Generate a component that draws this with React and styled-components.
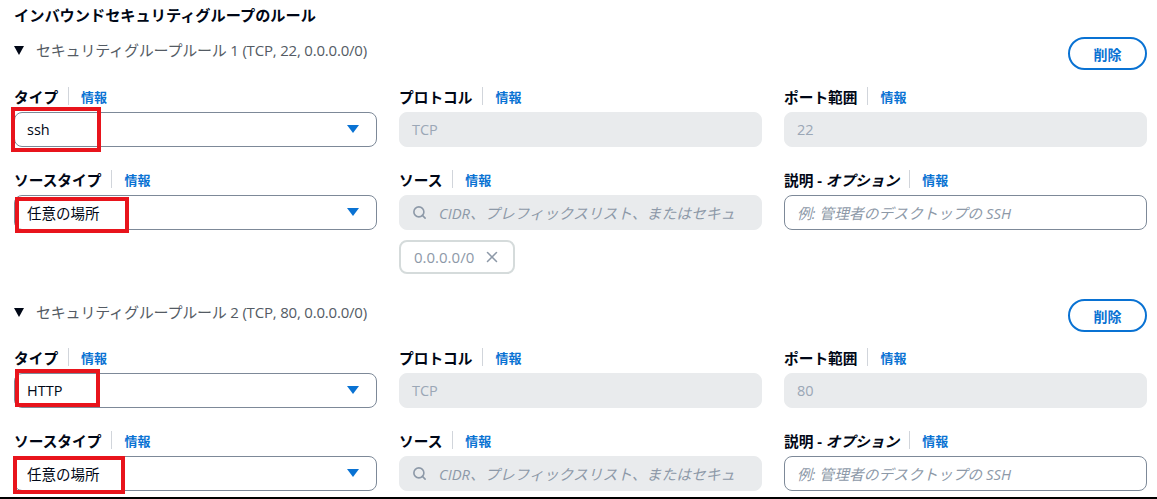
import React from "react";
import styled, { createGlobalStyle } from "styled-components";
import { Search, X } from "lucide-react";

const Global = createGlobalStyle`
  html, body { margin: 0; padding: 0; background: #fff; }
  body { font-family: "Open Sans", "Noto Sans CJK JP", sans-serif; color: #000716; }
  * { box-sizing: border-box; }
`;

const Page = styled.div`
  height: 499px;
  overflow: hidden;
  border-bottom: 2px solid #000;
  padding: 5px 10px 0 14px;
`;

const Title = styled.h2`
  margin: 0;
  font-size: 15.2px;
  line-height: 20px;
  font-weight: 700;
  color: #000716;
`;

const Rule = styled.section`
  margin-top: ${(p) => p.$top}px;
`;

const RuleHeader = styled.div`
  display: flex;
  justify-content: space-between;
  align-items: flex-start;
`;

const Toggle = styled.div`
  display: flex;
  align-items: center;
  gap: 12px;
  margin-top: 3px;
  font-size: 15px;
  line-height: 20px;
  color: #545b64;
  letter-spacing: -0.2px;
`;

const DeleteButton = styled.button`
  width: 79px;
  height: 33px;
  border: 2px solid #0972d3;
  border-radius: 17px;
  background: #fff;
  color: #0972d3;
  font-family: "Noto Sans CJK JP", sans-serif;
  font-weight: 700;
  font-size: 14px;
  padding: 0;
`;

const Grid = styled.div`
  display: grid;
  grid-template-columns: repeat(3, 1fr);
  column-gap: 22px;
  row-gap: 23px;
  margin-top: ${(p) => p.$top}px;
`;

const Field = styled.div`
  display: flex;
  flex-direction: column;
  gap: 7px;
  min-width: 0;
`;

const LabelRow = styled.div`
  display: flex;
  align-items: center;
  height: 18px;
`;

const LabelText = styled.span`
  font-size: 14.7px;
  font-weight: 700;
  color: #000716;
  white-space: nowrap;
`;

const Italic = styled.span`
  font-style: italic;
`;

const Sep = styled.span`
  width: 1px;
  height: 18px;
  background: #d1d5db;
  margin: 0 12px 0 10px;
`;

const Info = styled.span`
  font-size: 13px;
  font-weight: 700;
  color: #0972d3;
`;

const Control = styled.div`
  position: relative;
  height: 35px;
  border-radius: 8px;
  display: flex;
  align-items: center;
  padding: 0 ${(p) => (p.$tight ? 8 : 17)}px 0 12px;
  font-size: 14.5px;
  overflow: hidden;
  white-space: nowrap;
  background: ${(p) => (p.$disabled ? "#e9ebed" : "#fff")};
  border: 1px solid ${(p) => (p.$disabled ? "#e9ebed" : "#7d8998")};
  color: ${(p) => (p.$disabled ? "#9ba7b6" : "#000716")};
`;

const Value = styled.span`
  flex: 1;
  min-width: 0;
  overflow: hidden;
`;

const Placeholder = styled.span`
  flex: 1;
  min-width: 0;
  overflow: hidden;
  font-style: italic;
  color: #8d99a8;
  font-size: 14.8px;
`;

const SearchIcon = styled(Search)`
  flex: none;
  margin-right: 12px;
  color: #8d99a8;
`;

const Wrap = styled.div`
  position: relative;
`;

const Highlight = styled.div`
  position: absolute;
  left: ${(p) => p.$l}px;
  top: ${(p) => p.$t}px;
  width: ${(p) => p.$w}px;
  height: ${(p) => p.$h}px;
  border: 4px solid #e8141c;
  pointer-events: none;
`;

const Chip = styled.div`
  margin-top: 3px;
  align-self: flex-start;
  height: 34px;
  display: flex;
  align-items: center;
  gap: 9px;
  padding: 0 12px 0 13px;
  border: 2px solid #d5dbdb;
  border-radius: 8px;
  color: #8d99a8;
  font-size: 15px;
`;

const Caret = () => (
  <svg width="12" height="9" viewBox="0 0 12 9">
    <polygon points="0,0 12,0 6,8" fill="#0972d3" />
  </svg>
);

const Tri = () => (
  <svg width="10" height="9" viewBox="0 0 10 9">
    <polygon points="0,0 10,0 5,9" fill="#000716" />
  </svg>
);

const Label = ({ children }) => (
  <LabelRow>
    <LabelText>{children}</LabelText>
    <Sep />
    <Info>情報</Info>
  </LabelRow>
);

const Select = ({ value, hl }) => (
  <Wrap>
    <Control>
      <Value>{value}</Value>
      <Caret />
    </Control>
    {hl && <Highlight $l={hl[0]} $t={hl[1]} $w={hl[2]} $h={hl[3]} />}
  </Wrap>
);

const RuleBlock = ({ n, port, top, gridTop, hlType, hlSource, chip }) => (
  <Rule $top={top}>
    <RuleHeader>
      <Toggle>
        <Tri />
        <span>セキュリティグループルール {n} (TCP, {port}, 0.0.0.0/0)</span>
      </Toggle>
      <DeleteButton>削除</DeleteButton>
    </RuleHeader>
    <Grid $top={gridTop}>
      <Field>
        <Label>タイプ</Label>
        <Select value={n === 1 ? "ssh" : "HTTP"} hl={hlType} />
      </Field>
      <Field>
        <Label>プロトコル</Label>
        <Control $disabled>TCP</Control>
      </Field>
      <Field>
        <Label>ポート範囲</Label>
        <Control $disabled>{port}</Control>
      </Field>
      <Field>
        <Label>ソースタイプ</Label>
        <Select value="任意の場所" hl={hlSource} />
      </Field>
      <Field>
        <Label>ソース</Label>
        <Control $disabled $tight>
          <SearchIcon size={15} strokeWidth={2.6} />
          <Placeholder>CIDR、プレフィックスリスト、またはセキュ</Placeholder>
        </Control>
        {chip && (
          <Chip>
            0.0.0.0/0
            <X size={18} strokeWidth={2} color="#8d99a8" />
          </Chip>
        )}
      </Field>
      <Field>
        <Label>
          説明 - <Italic>オプション</Italic>
        </Label>
        <Control>
          <Placeholder>例: 管理者のデスクトップの SSH</Placeholder>
        </Control>
      </Field>
    </Grid>
  </Rule>
);

export default function App() {
  return (
    <>
      <Global />
      <Page>
        <Title>インバウンドセキュリティグループのルール</Title>
        <RuleBlock
          n={1}
          port="22"
          top={12}
          gridTop={17}
          hlType={[-3, -5, 90, 45]}
          hlSource={[1, 2, 114, 36]}
          chip
        />
        <RuleBlock
          n={2}
          port="80"
          top={25}
          gridTop={16}
          hlType={[1, -4, 85, 38]}
          hlSource={[-1, 0, 112, 38]}
        />
      </Page>
    </>
  );
}
